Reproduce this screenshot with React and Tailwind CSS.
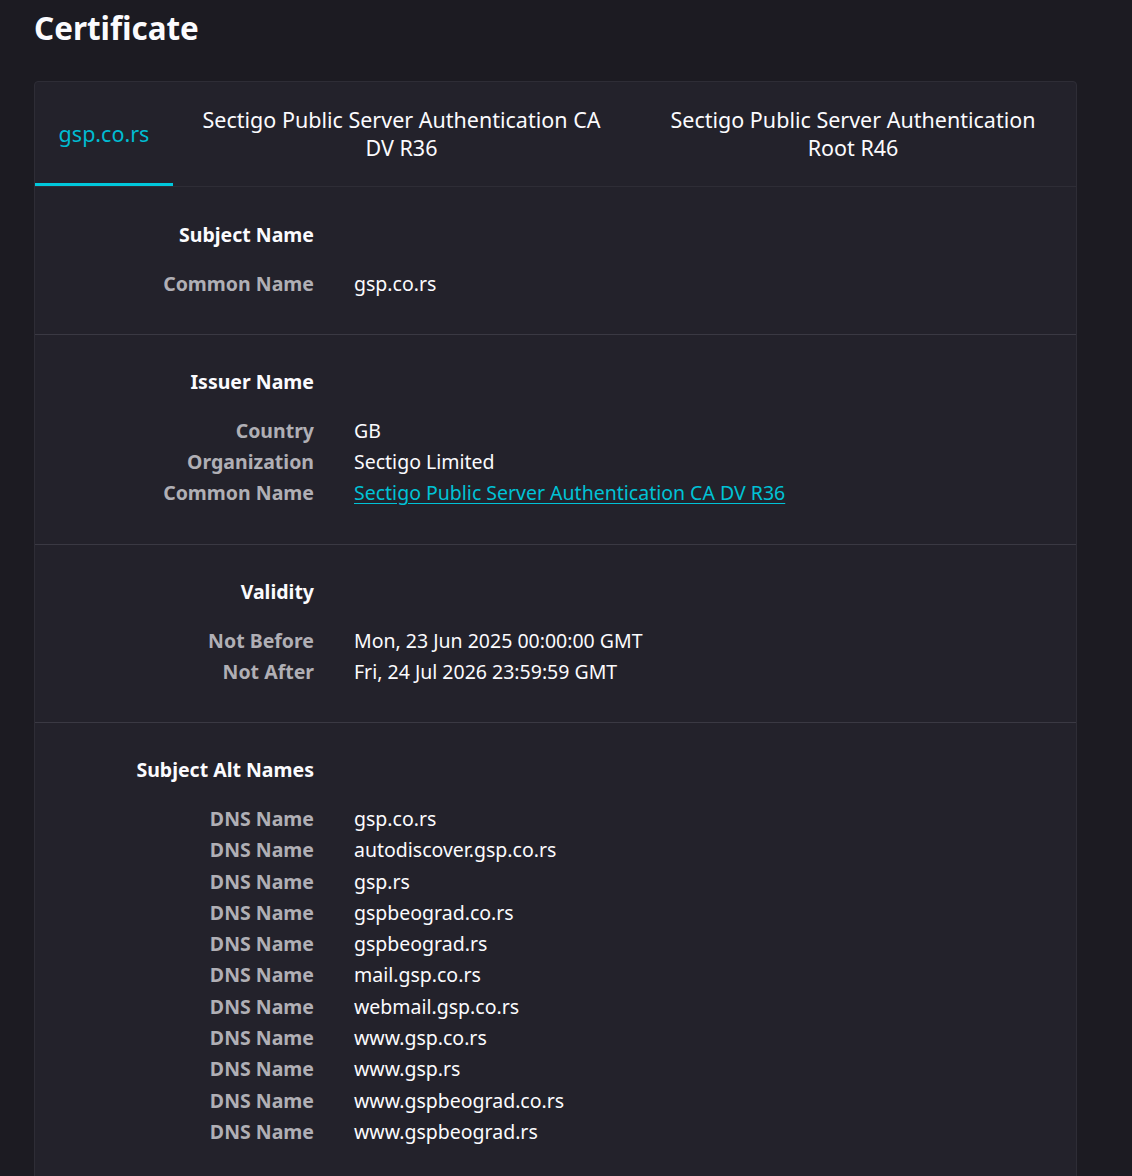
import React from 'react';

const tabs = [
  { name: 'gsp.co.rs', width: 'w-[138px]', active: true },
  { name: 'Sectigo Public Server Authentication CA DV R36', width: 'w-[457px]' },
  { name: 'Sectigo Public Server Authentication Root R46', width: 'flex-1' },
];

const dnsNames = [
  'gsp.co.rs',
  'autodiscover.gsp.co.rs',
  'gsp.rs',
  'gspbeograd.co.rs',
  'gspbeograd.rs',
  'mail.gsp.co.rs',
  'webmail.gsp.co.rs',
  'www.gsp.co.rs',
  'www.gsp.rs',
  'www.gspbeograd.co.rs',
  'www.gspbeograd.rs',
];

const sections = [
  {
    title: 'Subject Name',
    rows: [['Common Name', 'gsp.co.rs']],
  },
  {
    title: 'Issuer Name',
    rows: [
      ['Country', 'GB'],
      ['Organization', 'Sectigo Limited'],
      ['Common Name', 'Sectigo Public Server Authentication CA DV R36', true],
    ],
  },
  {
    title: 'Validity',
    rows: [
      ['Not Before', 'Mon, 23 Jun 2025 00:00:00 GMT'],
      ['Not After', 'Fri, 24 Jul 2026 23:59:59 GMT'],
    ],
  },
  {
    title: 'Subject Alt Names',
    rows: dnsNames.map((n) => ['DNS Name', n]),
  },
];

const Section = ({ title, rows, first }) => (
  <section className={`border-b border-[#3a3943] pb-[35px] ${first ? 'pt-[32px]' : 'pt-[31px]'}`}>
    <div className="grid grid-cols-[279px_1fr] gap-x-[40px] leading-[31.3px]">
      <h2 className="text-right font-bold text-[#fbfbfe] mb-[17.5px]">{title}</h2>
      <div />
      {rows.map(([label, value, link], i) => (
        <React.Fragment key={i}>
          <div className="text-right font-bold text-[#b0afb5]">{label}</div>
          <div className="text-[#fbfbfe]">
            {link ? (
              <a href="#" className="text-[#00c2d6] underline underline-offset-[3px]">{value}</a>
            ) : (
              value
            )}
          </div>
        </React.Fragment>
      ))}
    </div>
  </section>
);

const App = () => {
  return (
    <div
      className="bg-[#1c1b22] min-h-screen pl-[34px] pr-[55px] pb-10 text-[19.5px] text-[#fbfbfe]"
      style={{ fontFamily: '"Noto Sans", sans-serif' }}
    >
      <h1 className="text-[31.4px] font-bold leading-[56px]">Certificate</h1>
      <div className="mt-[25px] rounded-t-[4px] border border-[#2e2d36] bg-[#23222b]">
        <div className="flex h-[105px] border-b border-[#2e2d36]">
          {tabs.map((tab) => (
            <div
              key={tab.name}
              className={`${tab.width} flex items-center justify-center px-[26px] pt-[3px] text-center text-[21.5px] leading-[28px] ${
                tab.active
                  ? 'text-[#00bcd2] border-b-[3px] border-[#00c8dc]'
                  : 'text-[#fbfbfe] border-b-[3px] border-transparent'
              }`}
            >
              {tab.name}
            </div>
          ))}
        </div>
        {sections.map((s, i) => (
          <Section key={s.title} first={i === 0} {...s} />
        ))}
      </div>
    </div>
  );
};

export default App;
